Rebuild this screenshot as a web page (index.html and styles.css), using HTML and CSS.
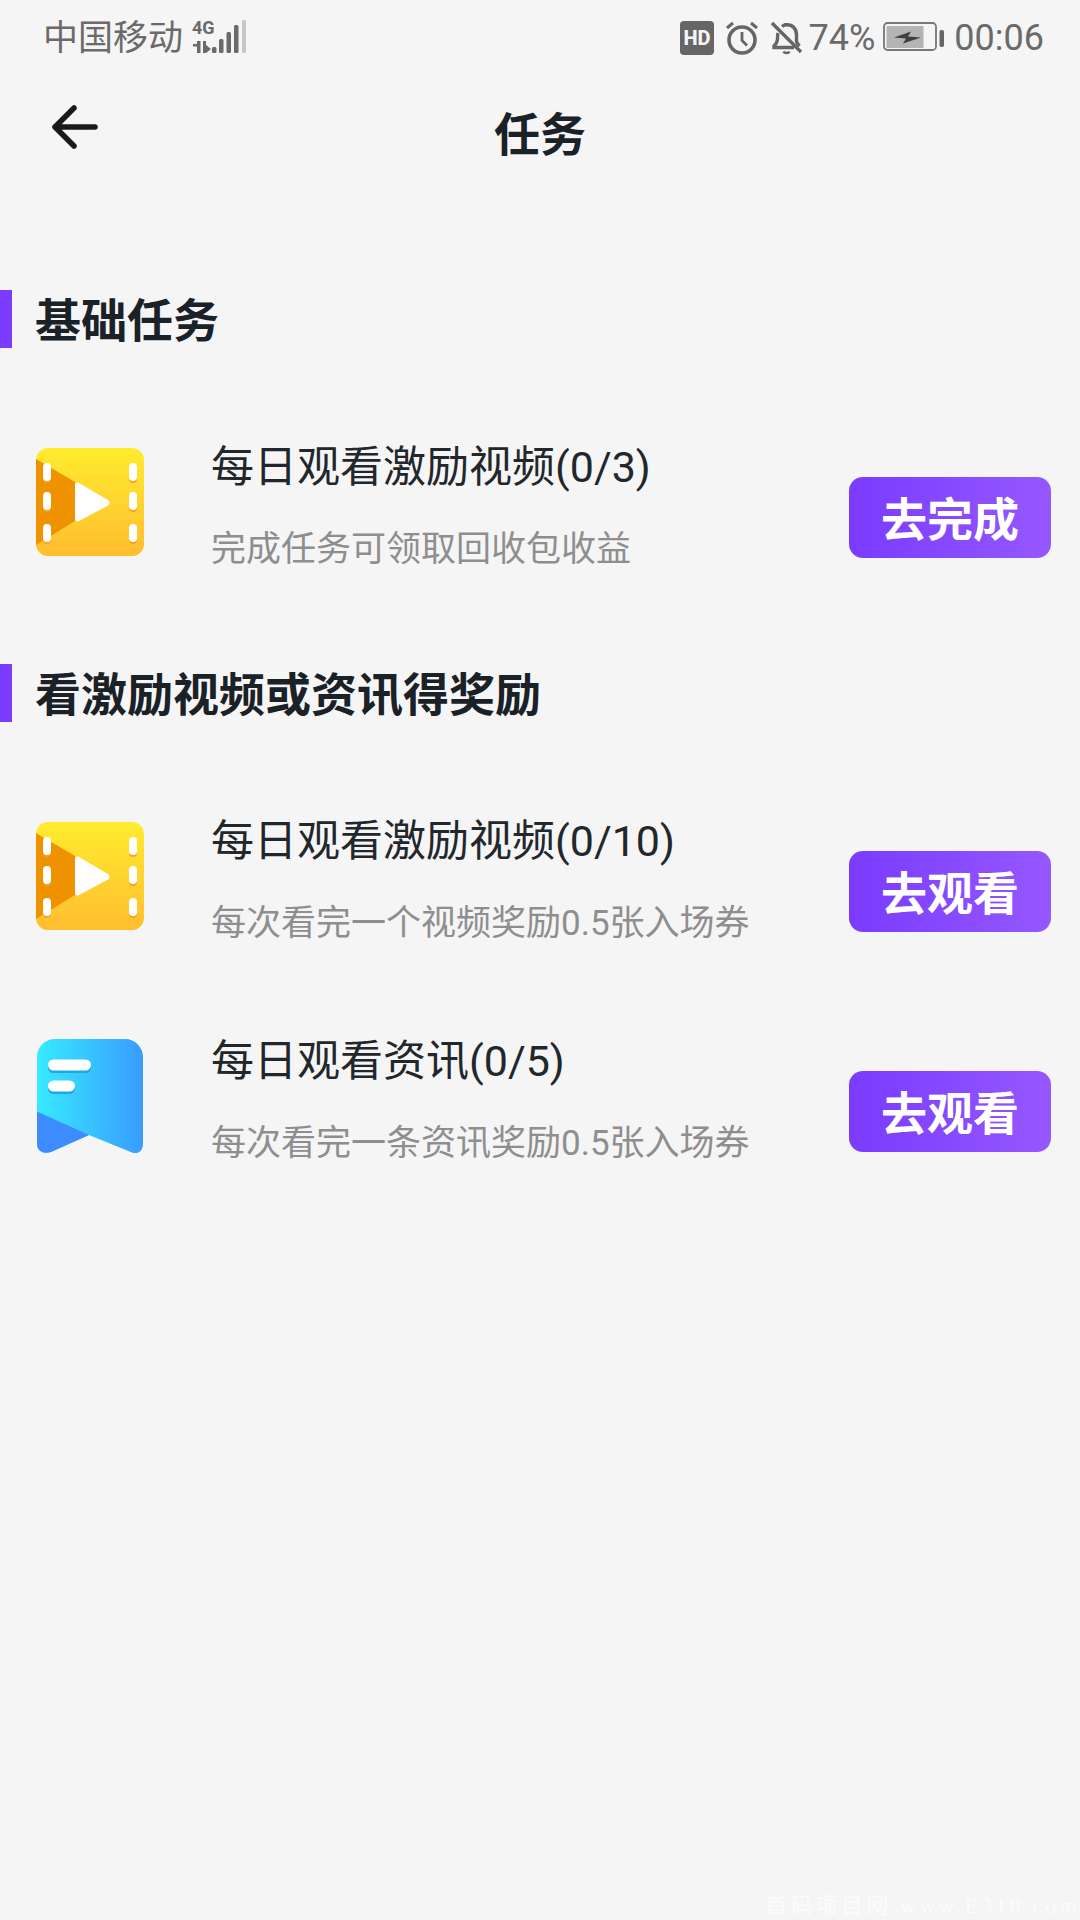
FILE: index.html
```html
<!DOCTYPE html>
<html lang="zh-CN">
<head>
<meta charset="utf-8">
<title>任务</title>
<link rel="stylesheet" href="styles.css">
</head>
<body>
<div class="page">
  <div class="status">
    <div class="status-left">
      <span class="carrier">中国移动</span>
      <svg class="sig" width="58" height="36" viewBox="0 0 58 36">
        <text x="0" y="16" class="sig-t">4G</text>
        <g fill="#6a6a6a">
          <rect x="1" y="26" width="6" height="2.5"/><rect x="5" y="23" width="3.5" height="12"/>
          <rect x="11" y="23" width="3" height="12"/><path d="M14 27l5 4-5 4z"/>
          <rect x="20" y="29" width="4.500" height="6" rx="1.500"/>
          <rect x="27" y="21" width="4.500" height="14" rx="1.500"/>
          <rect x="34.500" y="14" width="4.500" height="21" rx="1.500"/>
          <rect x="42" y="7" width="4.500" height="28" rx="1.500"/>
        </g>
        <rect x="50" y="2" width="4" height="33" rx="1.500" fill="#c6c6c6"/>
      </svg>
    </div>
    <div class="status-right">
      <svg class="ic-hd" width="34" height="34" viewBox="0 0 34 34">
        <rect width="34" height="34" rx="4" fill="#666"/>
        <text x="17" y="24" text-anchor="middle" class="hd-t">HD</text>
      </svg>
      <svg class="ic-alarm" width="34" height="34" viewBox="0 0 34 34" fill="none" stroke="#666" stroke-width="3.600">
        <circle cx="17" cy="19" r="13"/>
        <path d="M17 11v8.500l5 5" stroke-width="2.800"/>
        <path d="M2 7l6-5M32 7l-6-5" stroke-width="3"/>
      </svg>
      <svg class="ic-bell" width="32" height="34" viewBox="0 0 32 34" fill="none" stroke="#666" stroke-width="3.400">
        <path d="M7 12c-.5 2-.5 4-.5 6 0 3-1.500 5-3.500 7v1.500h20"/>
        <path d="M11 5.500c1.500-1.200 3-1.800 5-1.800 5.500 0 9.500 4 9.500 10v6.300c0 2 1.500 3.500 3 5"/>
        <path d="M15 2v3" />
        <path d="M1 2l29 29"/>
        <path d="M12.500 30.500c1 2 5 2 6 0" stroke-width="2.600"/>
      </svg>
      <span class="pct">74%</span>
      <svg class="ic-batt" width="62" height="31" viewBox="0 0 62 31">
        <rect x="1" y="1" width="52" height="27" rx="3.500" fill="none" stroke="#777" stroke-width="1.800"/>
        <rect x="3.500" y="4" width="37" height="22" fill="#b4b4b4"/>
        <path d="M11 15.500l17-6-3 5 13 1-18 6 3-5z" fill="#3f3f3f"/>
        <rect x="56.500" y="8" width="4.500" height="17" rx="1.800" fill="#666"/>
      </svg>
      <span class="clock">00:06</span>
    </div>
  </div>

  <header class="nav">
    <svg class="back" width="46" height="44" viewBox="0 0 46 44" fill="none" stroke="#1a1a1a" stroke-width="5.500" stroke-linecap="round" stroke-linejoin="round">
      <path d="M43 22H3M22 3L3 22l19 19"/>
    </svg>
    <h1 class="nav-title">任务</h1>
  </header>

  <section class="group group-first">
    <h2 class="group-title">基础任务</h2>
    <div class="item">
      <svg class="thumb" width="108" height="108" viewBox="0 0 108 108">
        <defs>
          <linearGradient id="film" x1="0" y1="0" x2="0" y2="1"><stop offset="0" stop-color="#ffec2e"/><stop offset="1" stop-color="#ffbd2f"/></linearGradient>
        </defs>
        <rect width="108" height="108" rx="12" fill="url(#film)"/>
        <path d="M0 11l39 23v39L0 97z" fill="#ee9200"/>
        <path d="M39 37c0-2 2-3 4-2l29 17c2 1.500 2 4 0 5.500L43 73c-2 1-4 0-4-2z" fill="#fff"/>
        <g fill="#f6a321">
          <rect x="7" y="17" width="8" height="18" rx="4"/><rect x="7" y="46" width="8" height="18" rx="4"/><rect x="7" y="78" width="8" height="18" rx="4"/>
          <rect x="93" y="17" width="8" height="18" rx="4"/><rect x="93" y="46" width="8" height="18" rx="4"/><rect x="93" y="78" width="8" height="18" rx="4"/>
        </g>
        <g fill="#fff">
          <rect x="7" y="15" width="8" height="18" rx="4"/><rect x="7" y="44" width="8" height="18" rx="4"/><rect x="7" y="76" width="8" height="18" rx="4"/>
          <rect x="93" y="15" width="8" height="18" rx="4"/><rect x="93" y="44" width="8" height="18" rx="4"/><rect x="93" y="76" width="8" height="18" rx="4"/>
        </g>
      </svg>
      <div class="info">
        <div class="item-title">每日观看激励视频(0/3)</div>
        <div class="item-sub">完成任务可领取回收包收益</div>
      </div>
      <button class="action">去完成</button>
    </div>
  </section>

  <section class="group">
    <h2 class="group-title">看激励视频或资讯得奖励</h2>
    <div class="item">
      <svg class="thumb" width="108" height="108" viewBox="0 0 108 108">
        <rect width="108" height="108" rx="12" fill="url(#film)"/>
        <path d="M0 11l39 23v39L0 97z" fill="#ee9200"/>
        <path d="M39 37c0-2 2-3 4-2l29 17c2 1.500 2 4 0 5.500L43 73c-2 1-4 0-4-2z" fill="#fff"/>
        <g fill="#f6a321">
          <rect x="7" y="17" width="8" height="18" rx="4"/><rect x="7" y="46" width="8" height="18" rx="4"/><rect x="7" y="78" width="8" height="18" rx="4"/>
          <rect x="93" y="17" width="8" height="18" rx="4"/><rect x="93" y="46" width="8" height="18" rx="4"/><rect x="93" y="78" width="8" height="18" rx="4"/>
        </g>
        <g fill="#fff">
          <rect x="7" y="15" width="8" height="18" rx="4"/><rect x="7" y="44" width="8" height="18" rx="4"/><rect x="7" y="76" width="8" height="18" rx="4"/>
          <rect x="93" y="15" width="8" height="18" rx="4"/><rect x="93" y="44" width="8" height="18" rx="4"/><rect x="93" y="76" width="8" height="18" rx="4"/>
        </g>
      </svg>
      <div class="info">
        <div class="item-title">每日观看激励视频(0/10)</div>
        <div class="item-sub">每次看完一个视频奖励0.5张入场券</div>
      </div>
      <button class="action">去观看</button>
    </div>
    <div class="item">
      <svg class="thumb thumb-news" width="108" height="116" viewBox="0 0 108 116">
        <defs>
          <linearGradient id="news" x1="0" y1="0" x2="1" y2="0"><stop offset="0" stop-color="#37eaff"/><stop offset="1" stop-color="#399bff"/></linearGradient>
        </defs>
        <path d="M1 18C1 8 9 0 19 0h70c10 0 18 8 18 18v87c0 7-5 10.500-11 8.500L53 96 15 113c-7 2.500-14-1-14-8z" fill="url(#news)"/>
        <path d="M1 72.500L53 96 15 113c-7 2.500-14-1-14-8z" fill="#3c8cff"/>
        <rect x="12" y="23" width="43" height="11" rx="5.500" fill="#1ea5ec"/>
        <rect x="12" y="44" width="27" height="11" rx="5.500" fill="#1ea5ec"/>
        <rect x="12" y="20.500" width="43" height="11" rx="5.500" fill="#fff"/>
        <rect x="12" y="41.500" width="27" height="11" rx="5.500" fill="#fff"/>
      </svg>
      <div class="info">
        <div class="item-title">每日观看资讯(0/5)</div>
        <div class="item-sub">每次看完一条资讯奖励0.5张入场券</div>
      </div>
      <button class="action">去观看</button>
    </div>
  </section>

  <div class="watermark">首码项目网 www.E318.com</div>
</div>
</body>
</html>
```

FILE: styles.css
```css
* { box-sizing: border-box; }
html, body { margin: 0; padding: 0; }
body {
  background: #f5f5f5;
  font-family: Roboto, "Noto Sans CJK SC", sans-serif;
}
.page {
  position: relative;
  width: 1080px;
  height: 1920px;
  overflow: hidden;
  background: #f5f5f5;
}
.status {
  height: 72px;
  padding: 3px 36px 0 43px;
  display: flex;
  justify-content: space-between;
  align-items: center;
  color: #6a6a6a;
}
.status-left, .status-right { display: flex; align-items: center; }
.carrier { font-size: 35px; line-height: 66px; margin-top: 2px; }
.sig { margin-left: 9px; margin-top: -4px; overflow: visible; }
.sig-t { font: 700 18px "Liberation Sans Narrow", Roboto, sans-serif; fill: #6a6a6a; }
.hd-t { font: 800 20px "Roboto", sans-serif; fill: #f5f5f5; }
.ic-alarm { margin-left: 11px; }
.ic-bell { margin-left: 12px; }
.pct { font-size: 36px; margin-left: 6px; line-height: 66px; }
.ic-batt { margin-left: 8px; }
.clock { font-size: 36px; margin-left: 9px; line-height: 66px; }

.nav {
  position: relative;
  height: 120px;
  padding-top: 6px;
  display: flex;
  justify-content: center;
  align-items: center;
}
.back { position: absolute; left: 52px; top: 33px; }
.nav-title {
  margin: 0;
  font-size: 46px;
  line-height: 60px;
  font-weight: 700;
  color: #1a2127;
}
.group { margin-top: 14px; }
.group-first { margin-top: 98px; }
.group-title {
  margin: 0 0 82px;
  height: 58px;
  border-left: 12px solid #7b3cff;
  padding-left: 23px;
  font-size: 46px;
  line-height: 63px;
  font-weight: 700;
  color: #1a2127;
}
.item {
  height: 220px;
  padding: 0 29px 0 36px;
  display: flex;
  align-items: flex-start;
}
.thumb { margin-top: 18px; flex: none; }
.thumb-news { margin-top: 15px; }
.info { margin-left: 67px; flex: 1; }
.item-title {
  font-size: 43px;
  line-height: 74px;
  color: #22272c;
}
.item-sub {
  margin-top: 9px;
  font-size: 35px;
  line-height: 74px;
  color: #8e8e8e;
}
.action {
  margin-top: 47px;
  width: 202px;
  height: 81px;
  border: 0;
  border-radius: 14px;
  background: linear-gradient(90deg, #7a3bff, #9558ff);
  color: #fff;
  font-family: inherit;
  font-size: 46px;
  font-weight: 700;
  padding: 0 0 3px;
}
.watermark {
  position: absolute;
  right: 0;
  bottom: 1px;
  font-family: "Liberation Serif", "Noto Sans CJK SC", serif;
  font-size: 22px;
  letter-spacing: 3.2px;
  color: rgba(255, 255, 255, 0.7);
  white-space: nowrap;
}
```
